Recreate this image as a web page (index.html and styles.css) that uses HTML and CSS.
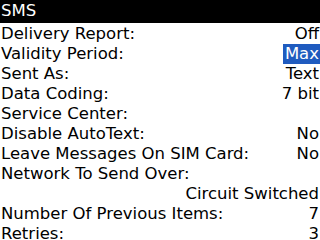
FILE: index.html
```html
<!DOCTYPE html>
<html lang="en">
<head>
  <meta charset="UTF-8">
  <title>SMS Options</title>
  <link rel="stylesheet" href="styles.css">
</head>
<body>
  <div class="screen">
    <div class="title-bar">SMS</div>
    <div class="options">
      <div class="row"><span class="label">Delivery Report:</span><span class="value">Off</span></div>
      <div class="row"><span class="label">Validity Period:</span><span class="value selected">Max</span></div>
      <div class="row"><span class="label">Sent As:</span><span class="value">Text</span></div>
      <div class="row"><span class="label">Data Coding:</span><span class="value">7 bit</span></div>
      <div class="row"><span class="label">Service Center:</span></div>
      <div class="row"><span class="label">Disable AutoText:</span><span class="value">No</span></div>
      <div class="row"><span class="label">Leave Messages On SIM Card:</span><span class="value">No</span></div>
      <div class="row"><span class="label">Network To Send Over:</span></div>
      <div class="row"><span class="value">Circuit Switched</span></div>
      <div class="row"><span class="label">Number Of Previous Items:</span><span class="value">7</span></div>
      <div class="row"><span class="label">Retries:</span><span class="value">3</span></div>
    </div>
  </div>
</body>
</html>
```
FILE: styles.css
```css
body {
  margin: 0;
  background-color: #fff;
  font-family: "DejaVu Sans", sans-serif;
  font-size: 16.5px;
  color: #000;
}
.screen {
  width: 320px;
  height: 240px;
  overflow: hidden;
}
.title-bar {
  background-color: #000;
  color: #fff;
  height: 23px;
  line-height: 22px;
  padding-left: 1px;
}
.options {
  padding-top: 1px;
}
.row {
  display: flex;
  justify-content: space-between;
  height: 20px;
  line-height: 20px;
  padding-left: 1px;
}
.value {
  margin-left: auto;
  padding: 0 1px 0 2px;
}
.selected {
  background-color: #1f5bbf;
  color: #fff;
}
```
